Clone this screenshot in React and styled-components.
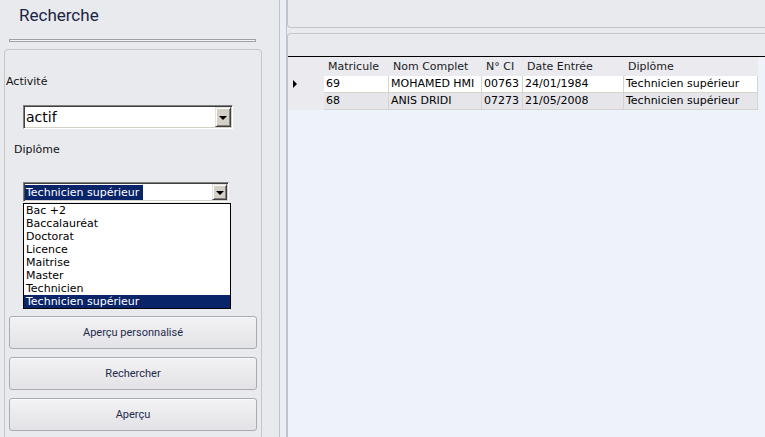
import React from 'react';
import styled, { createGlobalStyle } from 'styled-components';

const Global = createGlobalStyle`
  html, body { margin: 0; padding: 0; background: #e9eaee; overflow: hidden; }
  #root { width: 765px; height: 437px; }
  * { box-sizing: border-box; }
`;

const Shell = styled.div`
  display: flex;
  width: 765px;
  height: 437px;
  overflow: hidden;
  background: #e9eaee;
`;

const Sidebar = styled.aside`
  width: 279px;
  flex: none;
  display: flex;
  flex-direction: column;
  overflow: hidden;
`;

const Title = styled.h1`
  margin: 0;
  flex: none;
  height: 39px;
  padding: 5px 0 0 19px;
  font: 400 17px/20px Roboto, "Liberation Sans", sans-serif;
  color: #1b2443;
`;

const Rule = styled.div`
  flex: none;
  margin-left: 9px;
  width: 247px;
  height: 3px;
  border: 1px solid #9d9fa8;
  background: #f4f4f6;
`;

const GroupBox = styled.section`
  position: relative;
  margin: 7px 0 0 4px;
  width: 258px;
  height: 420px;
  flex: none;
  border: 1px solid #c5c6cb;
  border-radius: 4px;
  display: flex;
  flex-direction: column;
`;

const Label = styled.div`
  flex: none;
  margin: ${p => p.$top}px 0 0 ${p => p.$left}px;
  font: 11px/13px "DejaVu Sans", Verdana, sans-serif;
  color: #111;
`;

const ComboWrap = styled.div`
  position: relative;
  margin: ${p => p.$top}px 0 0 18px;
  width: ${p => p.$w}px;
  height: ${p => p.$h}px;
  flex: none;
`;

const Combo = styled.div`
  width: 100%;
  height: 100%;
  display: flex;
  align-items: stretch;
  background: #fff;
  border: 1px solid;
  border-color: #7f7f7f #fff #fff #7f7f7f;
  box-shadow: inset 1px 1px 0 #404040, inset -1px -1px 0 #d4d0c8;
  padding: 1px;
`;

const ComboText = styled.div`
  flex: 1;
  display: flex;
  align-items: center;
  padding-left: ${p => (p.$big ? 1 : 0)}px;
  font: ${p => (p.$big ? '14px/18px' : '11px/15px')} "DejaVu Sans", Verdana, sans-serif;
  color: #000;
  overflow: hidden;
  white-space: nowrap;
`;

const Highlight = styled.span`
  background: #0a246a;
  color: #fff;
  padding: 0 4px 0 1px;
  line-height: 15px;
`;

const DropBtn = styled.div`
  width: ${p => p.$w}px;
  flex: none;
  display: flex;
  align-items: center;
  justify-content: center;
  background: #d4d0c8;
  border: 1px solid;
  border-color: #e4e2dc #404040 #404040 #e4e2dc;
  box-shadow: inset 1px 1px 0 #fff, inset -1px -1px 0 #808080;
`;

const Arrow = styled.span`
  width: 0;
  height: 0;
  border-left: 4px solid transparent;
  border-right: 4px solid transparent;
  border-top: 4px solid #000;
  margin-top: 1px;
`;

const DropList = styled.ul`
  position: absolute;
  top: 21px;
  left: 0;
  width: 208px;
  margin: 0;
  padding: 0;
  list-style: none;
  background: #fff;
  border: 1px solid #000;
  z-index: 5;
`;

const Option = styled.li`
  height: 13px;
  padding-left: 2px;
  font: 11px/13px "DejaVu Sans", Verdana, sans-serif;
  white-space: nowrap;
  color: ${p => (p.$sel ? '#fff' : '#000')};
  background: ${p => (p.$sel ? '#0a246a' : 'transparent')};
`;

const Buttons = styled.div`
  flex: none;
  margin: 114px 0 0 4px;
  display: flex;
  flex-direction: column;
  gap: 8px;
`;

const Button = styled.button`
  width: 248px;
  height: 33px;
  border: 1px solid #a9abb4;
  border-radius: 3px;
  background: linear-gradient(#f2f2f4, #e3e3e7);
  box-shadow: inset 0 1px 0 #fafafb;
  font: 400 11px/14px Roboto, "Liberation Sans", sans-serif;
  color: #1e2a4c;
  padding: 0;
  cursor: pointer;
`;

const Splitter = styled.div`
  width: 8px;
  flex: none;
  background: #eceef2;
  border-left: 1px solid #b7c4d6;
  border-right: 1px solid #b7c4d6;
`;

const Main = styled.main`
  flex: 1;
  min-width: 0;
  display: flex;
  flex-direction: column;
  margin-right: -6px;
`;

const TopBox = styled.div`
  height: 28px;
  flex: none;
  border-left: 1px solid #c4c5ca;
  border-bottom: 1px solid #c4c5ca;
  border-bottom-left-radius: 4px;
  background: #e9eaee;
  margin-bottom: 5px;
`;

const ContentBox = styled.div`
  flex: 1;
  display: flex;
  flex-direction: column;
  border-left: 1px solid #c4c5ca;
  border-top: 1px solid #c4c5ca;
  border-top-left-radius: 4px;
  background: #e9eaee;
`;

const Strip = styled.div`
  height: 22px;
  flex: none;
`;

const Grid = styled.div`
  flex: 1;
  border-top: 1px solid #000;
  background: #eef3fb;
  font: 11px "DejaVu Sans", Verdana, sans-serif;
  color: #000;
`;

const Row = styled.div`
  display: grid;
  grid-template-columns: 36px 65px 93px 41px 101px 134px;
  width: 470px;
  height: ${p => (p.$head ? 19 : 17)}px;
`;

const HeadCell = styled.div`
  background: #ebebef;
  padding-left: 4px;
  line-height: 19px;
  color: #1a1a24;
  white-space: nowrap;
`;

const Indicator = styled.div`
  background: #ebebef;
  position: relative;
`;

const Pointer = styled.span`
  position: absolute;
  left: 5px;
  top: 4px;
  width: 0;
  height: 0;
  border-top: 4px solid transparent;
  border-bottom: 4px solid transparent;
  border-left: 4px solid #000;
`;

const Cell = styled.div`
  background: ${p => (p.$alt ? '#e6e6ea' : '#ffffff')};
  border-right: 1px solid #d6d4cf;
  border-bottom: 1px solid #d6d4cf;
  padding-left: 2px;
  line-height: 16px;
  white-space: nowrap;
  overflow: hidden;
`;

const columns = ['Matricule', 'Nom Complet', 'N° CI', 'Date Entrée', 'Diplôme'];
const rows = [
  ['69', 'MOHAMED HMI', '00763', '24/01/1984', 'Technicien supérieur'],
  ['68', 'ANIS DRIDI', '07273', '21/05/2008', 'Technicien supérieur'],
];
const options = ['Bac +2', 'Baccalauréat', 'Doctorat', 'Licence', 'Maitrise', 'Master', 'Technicien', 'Technicien supérieur'];

export default function App() {
  return (
    <>
      <Global />
      <Shell>
        <Sidebar>
          <Title>Recherche</Title>
          <Rule />
          <GroupBox>
            <Label $top={25} $left={1}>Activité</Label>
            <ComboWrap $top={17} $w={210} $h={24}>
              <Combo>
                <ComboText $big>actif</ComboText>
                <DropBtn $w={16}><Arrow /></DropBtn>
              </Combo>
            </ComboWrap>
            <Label $top={14} $left={9}>Diplôme</Label>
            <ComboWrap $top={26} $w={206} $h={20}>
              <Combo>
                <ComboText><Highlight>Technicien supérieur</Highlight></ComboText>
                <DropBtn $w={15}><Arrow /></DropBtn>
              </Combo>
              <DropList>
                {options.map(o => (
                  <Option key={o} $sel={o === 'Technicien supérieur'}>{o}</Option>
                ))}
              </DropList>
            </ComboWrap>
            <Buttons>
              <Button>Aperçu personnalisé</Button>
              <Button>Rechercher</Button>
              <Button>Aperçu</Button>
            </Buttons>
          </GroupBox>
        </Sidebar>
        <Splitter />
        <Main>
          <TopBox />
          <ContentBox>
            <Strip />
            <Grid>
              <Row $head>
                <Indicator />
                {columns.map(c => <HeadCell key={c}>{c}</HeadCell>)}
              </Row>
              {rows.map((r, i) => (
                <Row key={i}>
                  <Indicator>{i === 0 && <Pointer />}</Indicator>
                  {r.map((v, j) => <Cell key={j} $alt={i % 2 === 1}>{v}</Cell>)}
                </Row>
              ))}
            </Grid>
          </ContentBox>
        </Main>
      </Shell>
    </>
  );
}
